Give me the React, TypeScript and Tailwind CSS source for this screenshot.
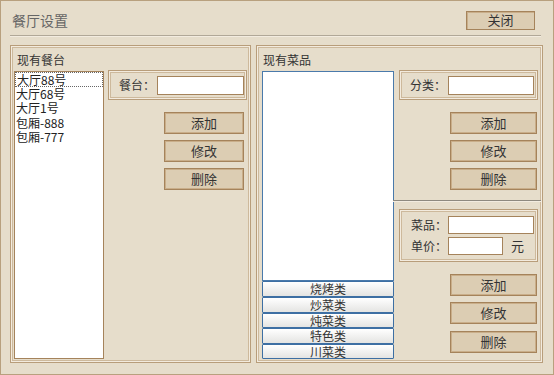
import React from "react";

const Btn = ({ label, className = "" }: { label: string; className?: string }) => (
  <div
    className={`h-[22px] flex items-center justify-center bg-[#dccdb3] border border-[#a5835b] shadow-[inset_1px_1px_0_#c9ae8a,inset_-1px_-1px_0_#c9ae8a] text-[13px] text-[#333] ${className}`}
  >
    {label}
  </div>
);

const CatBtn = ({ label, h }: { label: string; h: string }) => (
  <div
    className={`${h} w-full flex items-center justify-center border border-[#3d6fa3] rounded-[1px] bg-gradient-to-b from-[#ffffff] to-[#e4e4e2] text-[12px] leading-none text-[#333]`}
  >
    {label}
  </div>
);

const groupCls =
  "border border-[#b89d7a] shadow-[inset_0_0_0_1px_#f3ebde,inset_0_0_0_2px_#cdb99c]";

export default function App() {
  const tables = ["大厅88号", "大厅68号", "大厅1号", "包厢-888", "包厢-777"];
  return (
    <div className="w-[554px] h-[375px] bg-[#e6ddcb] border border-[#b8a07e] flex flex-col pl-[9px] pr-[10px] font-['Noto_Sans_CJK_SC',sans-serif] text-[12px] text-[#333] overflow-hidden">
      {/* header */}
      <div className="h-[18px] mt-[10px] flex items-center">
        <span className="pl-[2px] text-[14px] leading-[18px] text-[#666]">餐厅设置</span>
        <div className="ml-auto mr-[8px] w-[69px] h-[19px] flex items-center justify-center bg-[#dccdb3] border border-[#a5835b] shadow-[inset_1px_1px_0_#c9ae8a] text-[13px] text-[#333]">
          关闭
        </div>
      </div>
      <div className="mt-[6px] mr-[2px] h-[2px] border-t border-[#b1a898] border-b border-b-[#f3ece0]" />

      {/* groups */}
      <div className="mt-[8px] flex gap-[5px]">
        {/* left group */}
        <div className={`w-[241px] h-[318px] flex flex-col p-[3px] ${groupCls}`}>
          <div className="h-[22px] leading-[22px] pl-[3px] text-[12px] text-[#333]">现有餐台</div>
          <div className="flex">
            <div className="w-[92px] h-[288px] bg-white border border-[#a5835b] flex flex-col text-[12px] leading-[14.5px] text-[#222]">
              {tables.map((t, i) => (
                <div
                  key={t}
                  className={`pl-[1px] h-[14.5px] ${i === 0 ? "border border-dotted border-[#666] pl-0" : ""}`}
                >
                  {t}
                </div>
              ))}
            </div>
            <div className="ml-[4px] flex flex-col">
              <div className={`mt-[-1px] w-[139px] h-[30px] flex items-center ${groupCls}`}>
                <span className="pl-[10px] w-[48px] text-[12px] text-[#333]">餐台：</span>
                <div className="w-[87px] h-[19px] bg-white border border-[#a5835b]" />
              </div>
              <Btn label="添加" className="ml-[56px] w-[80px] mt-[12px]" />
              <Btn label="修改" className="ml-[56px] w-[80px] mt-[6px]" />
              <Btn label="删除" className="ml-[56px] w-[80px] mt-[6px]" />
            </div>
          </div>
        </div>

        {/* right group */}
        <div className={`w-[287px] h-[318px] flex flex-col pt-[3px] pl-[5px] ${groupCls}`}>
          <div className="h-[22px] leading-[22px] pl-[1px] text-[12px] text-[#333]">现有菜品</div>
          <div className="flex">
            <div className="w-[132px] flex flex-col">
              <div className="h-[210px] bg-white border border-[#4a7aab]" />
              <CatBtn label="烧烤类" h="h-[16px]" />
              <CatBtn label="炒菜类" h="h-[16px]" />
              <CatBtn label="炖菜类" h="h-[15px]" />
              <CatBtn label="特色类" h="h-[16px]" />
              <CatBtn label="川菜类" h="h-[15px]" />
            </div>
            <div className="flex-1 flex flex-col">
              <div className={`ml-[5px] mt-[-1px] w-[139px] h-[30px] flex items-center ${groupCls}`}>
                <span className="pl-[10px] w-[48px] text-[12px] text-[#333]">分类：</span>
                <div className="w-[86px] h-[19px] bg-white border border-[#a5835b]" />
              </div>
              <Btn label="添加" className="ml-[56px] w-[87px] mt-[12px]" />
              <Btn label="修改" className="ml-[56px] w-[87px] mt-[6px]" />
              <Btn label="删除" className="ml-[56px] w-[87px] mt-[6px]" />
              <div className="mt-[10px] ml-[-1px] mr-[1px] h-[2px] border-t border-[#8f8a80] border-b border-b-[#f3ece0]" />
              <div className={`ml-[5px] mt-[7px] w-[139px] h-[53px] flex flex-col pt-[6px] gap-[3px] ${groupCls}`}>
                <div className="flex items-center h-[18px]">
                  <span className="pl-[11px] w-[48px] text-[12px] text-[#333]">菜品：</span>
                  <div className="w-[86px] h-[18px] bg-white border border-[#a5835b]" />
                </div>
                <div className="flex items-center h-[18px]">
                  <span className="pl-[11px] w-[48px] text-[12px] text-[#333]">单价：</span>
                  <div className="w-[55px] h-[18px] bg-white border border-[#a5835b]" />
                  <span className="ml-[8px] text-[13px] text-[#333]">元</span>
                </div>
              </div>
              <Btn label="添加" className="ml-[56px] w-[87px] mt-[12px]" />
              <Btn label="修改" className="ml-[56px] w-[87px] mt-[6px]" />
              <Btn label="删除" className="ml-[56px] w-[87px] mt-[7px]" />
            </div>
          </div>
        </div>
      </div>
    </div>
  );
}
